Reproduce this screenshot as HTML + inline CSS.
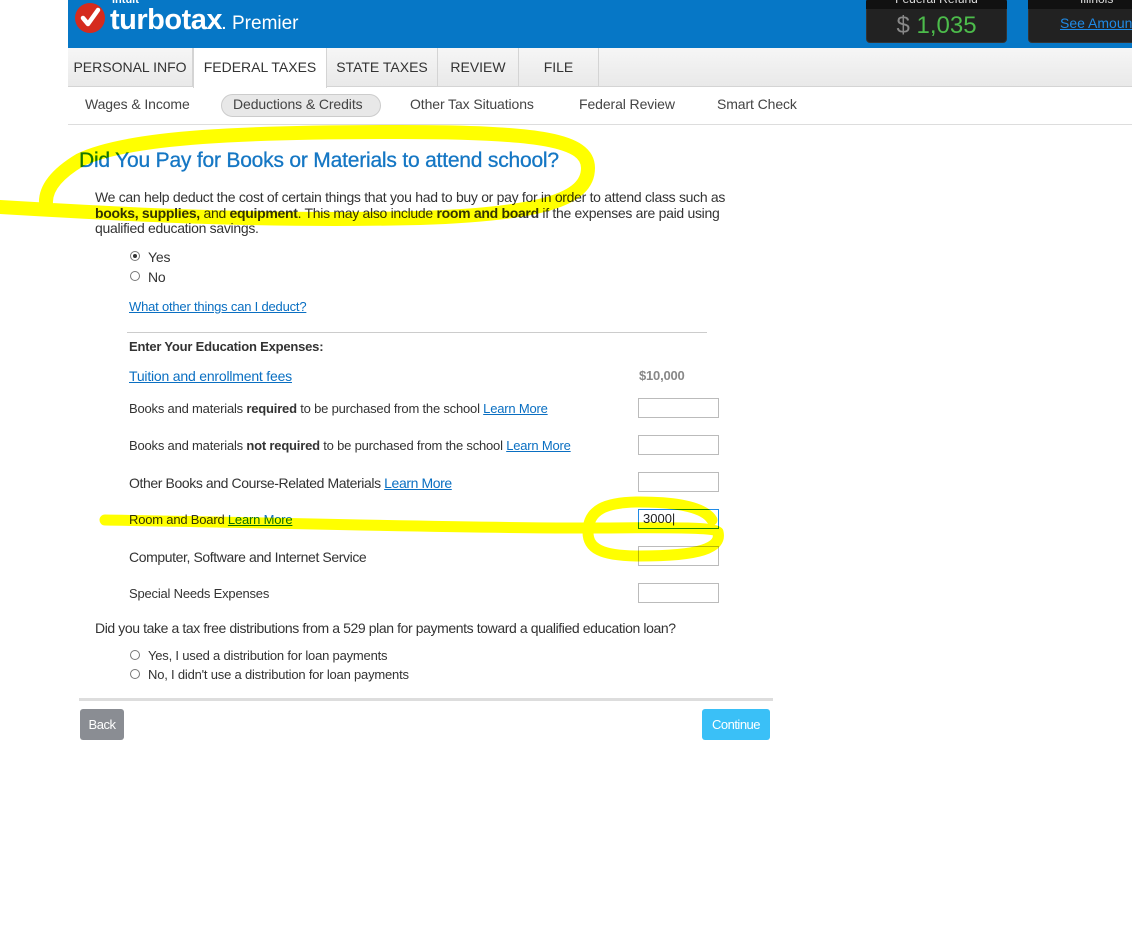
<!DOCTYPE html>
<html><head><meta charset="utf-8"><style>
*{margin:0;padding:0;box-sizing:border-box}
body{width:1132px;height:936px;position:relative;background:#fff;font-family:"Liberation Sans",Arial,sans-serif;color:#333;overflow:hidden}
.a{position:absolute;white-space:nowrap}
.t{font-size:13px;letter-spacing:-0.2px;color:#333}
a,.lk{color:#0a6fc2;text-decoration:underline}
.inp{position:absolute;left:638px;width:81px;height:20px;border:1px solid #bbb;background:#fff}
.rad{position:absolute;width:10px;height:10px;border:1px solid #777;border-radius:50%;background:#fff}
.tab{position:absolute;top:48px;height:39px;font-size:14px;color:#333;line-height:39px;text-align:center;border-right:1px solid #d4d4d4}
.sn{position:absolute;top:96px;font-size:14px;color:#444;letter-spacing:-0.1px}
</style></head><body>
<div class="a" style="left:68px;top:0;width:1064px;height:48px;background:#0677c6"></div>
<div class="a" style="left:75px;top:3px;width:30px;height:30px;border-radius:50%;background:#d52b1e"></div>
<svg class="a" style="left:75px;top:3px" width="30" height="30"><path d="M8 15 L13 21 L23 7" stroke="#fff" stroke-width="4.5" fill="none" stroke-linecap="round" stroke-linejoin="round"/></svg>
<div class="a" style="left:112px;top:-6px;color:#fff;font-size:11px;font-weight:bold">intuit</div>
<div class="a" style="left:110px;top:4px;color:#fff;font-size:29px;font-weight:bold;letter-spacing:-0.5px">turbotax<span style="font-size:14px">.</span></div>
<div class="a" style="left:232px;top:13px;color:#fff;font-size:19px">Premier</div>
<div class="a" style="left:866px;top:-2px;width:141px;height:45px;background:#222;border-radius:4px;border:1px solid #333"></div>
<div class="a" style="left:866px;top:-2px;width:141px;height:11px;background:#111;border-radius:4px 4px 0 0"></div>
<div class="a" style="left:866px;top:-8px;width:141px;text-align:center;color:#ddd;font-size:12px">Federal Refund</div>
<div class="a" style="left:866px;top:12px;width:141px;text-align:center;font-size:24px;color:#4cbc4b"><span style="color:#888">$</span> 1,035</div>
<div class="a" style="left:1028px;top:-2px;width:110px;height:45px;background:#222;border-radius:4px;border:1px solid #333"></div>
<div class="a" style="left:1028px;top:-2px;width:110px;height:11px;background:#111"></div>
<div class="a" style="left:1080px;top:-8px;color:#ddd;font-size:12px">Illinois</div>
<div class="a" style="left:1060px;top:15px;font-size:14px;color:#1f8ae6;text-decoration:underline">See Amount</div>

<div class="a" style="left:68px;top:48px;width:1064px;height:39px;background:linear-gradient(#f6f6f6,#e9e9e9);border-bottom:1px solid #d4d4d4"></div>
<div class="tab" style="left:68px;width:125px">PERSONAL INFO</div>
<div class="tab" style="left:193px;width:134px;background:#fff;height:40px;border-left:1px solid #d4d4d4">FEDERAL TAXES</div>
<div class="tab" style="left:327px;width:111px">STATE TAXES</div>
<div class="tab" style="left:438px;width:81px">REVIEW</div>
<div class="tab" style="left:519px;width:80px">FILE</div>
<div class="a" style="left:68px;top:124px;width:1064px;height:1px;background:#ddd"></div>
<div class="sn" style="left:85px">Wages &amp; Income</div>
<div class="a" style="left:221px;top:94px;width:160px;height:23px;border-radius:12px;background:#e8e8e8;border:1px solid #ccc"></div>
<div class="sn" style="left:233px">Deductions &amp; Credits</div>
<div class="sn" style="left:410px">Other Tax Situations</div>
<div class="sn" style="left:579px">Federal Review</div>
<div class="sn" style="left:717px">Smart Check</div>

<div class="a" style="left:79px;top:149px;font-size:21px;color:#1577c4;letter-spacing:-0.2px;-webkit-text-stroke:0.3px #1577c4">Did You Pay for Books or Materials to attend school?</div>
<div class="a t" style="left:95px;top:190px;font-size:14px;line-height:15.5px;white-space:normal;width:645px;letter-spacing:-0.3px">We can help deduct the cost of certain things that you had to buy or pay for in order to attend class such as <b>books, supplies,</b> and <b>equipment</b>. This may also include <b>room and board</b> if the expenses are paid using qualified education savings.</div>

<div class="rad" style="left:130px;top:251px"></div><div class="a" style="left:133px;top:254px;width:4px;height:4px;border-radius:50%;background:#333"></div>
<div class="a t" style="left:148px;top:249px;font-size:14px">Yes</div>
<div class="rad" style="left:130px;top:271px"></div>
<div class="a t" style="left:148px;top:269px;font-size:14px">No</div>
<div class="a t lk" style="left:129px;top:299px">What other things can I deduct?</div>
<div class="a" style="left:127px;top:332px;width:580px;height:1px;background:#ccc"></div>
<div class="a t" style="left:129px;top:339px;font-weight:bold">Enter Your Education Expenses:</div>
<div class="a t lk" style="left:129px;top:368px;font-size:14px">Tuition and enrollment fees</div>
<div class="a t" style="left:639px;top:368px;color:#888;font-weight:bold">$10,000</div>
<div class="a t" style="left:129px;top:401px">Books and materials <b>required</b> to be purchased from the school <span class="lk">Learn More</span></div>
<div class="inp" style="top:398px"></div>
<div class="a t" style="left:129px;top:438px">Books and materials <b>not required</b> to be purchased from the school <span class="lk">Learn More</span></div>
<div class="inp" style="top:435px"></div>
<div class="a t" style="left:129px;top:475px;font-size:14px;letter-spacing:-0.4px">Other Books and Course-Related Materials <span class="lk">Learn More</span></div>
<div class="inp" style="top:472px"></div>
<div class="a t" style="left:129px;top:512px">Room and Board <span class="lk">Learn More</span></div>
<div class="inp" style="top:509px;border-color:#1f8ae6;font-size:13px;padding-left:4px;line-height:17px;color:#222">3000|</div>
<div class="a t" style="left:129px;top:549px;font-size:14px;letter-spacing:-0.4px">Computer, Software and Internet Service</div>
<div class="inp" style="top:546px"></div>
<div class="a t" style="left:129px;top:586px">Special Needs Expenses</div>
<div class="inp" style="top:583px"></div>
<div class="a t" style="left:95px;top:620px;font-size:14px;letter-spacing:-0.4px">Did you take a tax free distributions from a 529 plan for payments toward a qualified education loan?</div>
<div class="rad" style="left:130px;top:650px"></div>
<div class="a t" style="left:148px;top:648px">Yes, I used a distribution for loan payments</div>
<div class="rad" style="left:130px;top:669px"></div>
<div class="a t" style="left:148px;top:667px">No, I didn't use a distribution for loan payments</div>
<div class="a" style="left:79px;top:698px;width:694px;height:3px;background:#ddd"></div>
<div class="a" style="left:80px;top:709px;width:44px;height:31px;background:#8a8d93;border-radius:3px;color:#fff;font-size:13px;letter-spacing:-0.5px;text-align:center;line-height:31px">Back</div>
<div class="a" style="left:702px;top:709px;width:68px;height:31px;background:#3ac0f7;border-radius:3px;color:#fff;font-size:13px;letter-spacing:-0.5px;text-align:center;line-height:31px">Continue</div>

<svg class="a" style="left:0;top:0;mix-blend-mode:multiply" width="1132" height="936">
<g fill="none" stroke="#ffff00" stroke-linecap="round" stroke-linejoin="round">
<path d="M0 207 C100 213 250 222 420 218 C540 214 588 200 588 168 C588 140 540 132 400 132 C250 132 130 136 80 160 C55 175 45 190 46 204" stroke-width="14"/>
<path d="M105 520 C250 522 450 528 580 528 C650 528 712 526 718 532 C722 548 700 556 640 556 C600 556 588 548 588 532 C588 510 605 502 640 502 C680 502 705 508 712 520" stroke-width="11"/>
</g></svg>
</body></html>
